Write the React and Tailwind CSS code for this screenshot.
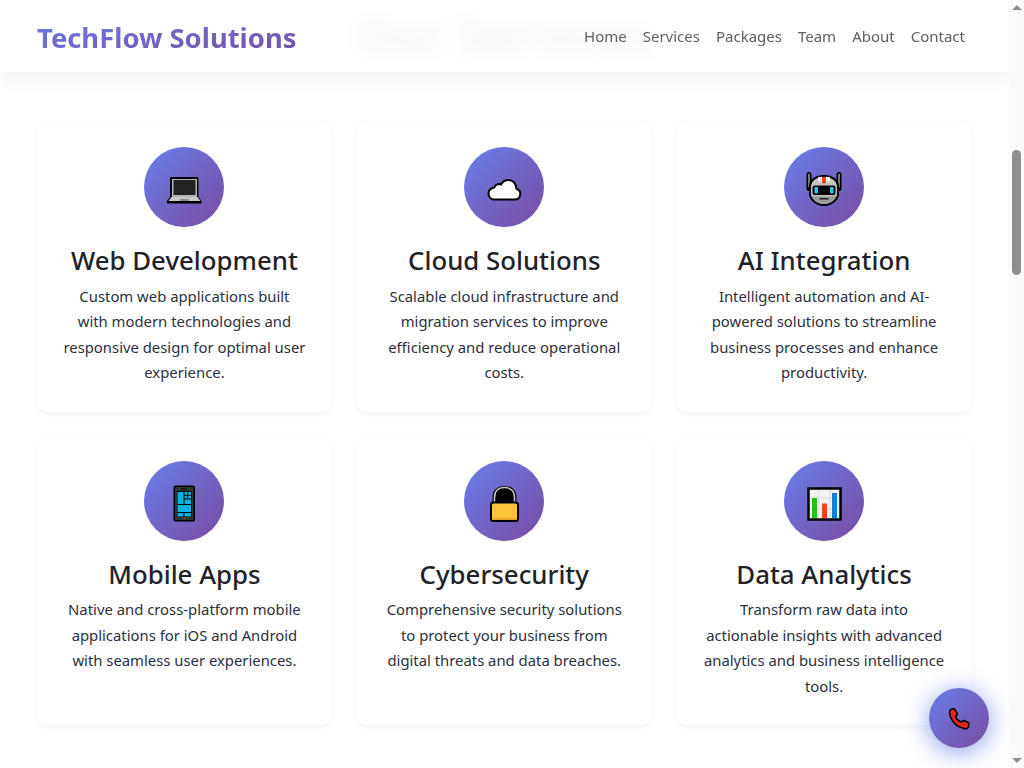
const services = [
  {
    title: "Web Development",
    text: "Custom web applications built with modern technologies and responsive design for optimal user experience.",
    icon: <LaptopIcon />,
  },
  {
    title: "Cloud Solutions",
    text: "Scalable cloud infrastructure and migration services to improve efficiency and reduce operational costs.",
    icon: <CloudIcon />,
  },
  {
    title: "AI Integration",
    text: "Intelligent automation and AI-powered solutions to streamline business processes and enhance productivity.",
    icon: <RobotIcon />,
  },
  {
    title: "Mobile Apps",
    text: "Native and cross-platform mobile applications for iOS and Android with seamless user experiences.",
    icon: <PhoneIcon />,
  },
  {
    title: "Cybersecurity",
    text: "Comprehensive security solutions to protect your business from digital threats and data breaches.",
    icon: <LockIcon />,
  },
  {
    title: "Data Analytics",
    text: "Transform raw data into actionable insights with advanced analytics and business intelligence tools.",
    icon: <ChartIcon />,
  },
];

const links = ["Home", "Services", "Packages", "Team", "About", "Contact"];

function LaptopIcon() {
  return (
    <svg viewBox="0 0 40 40" className="w-10 h-10 overflow-visible">
      <path d="M8 10h25a1.500 1.500 0 0 1 1.500 1.500V30l3 4v1.500a1 1 0 0 1-1 1H4a1 1 0 0 1-1-1V34l3-4V11.500A1.500 1.500 0 0 1 8 10z" fill="#000" />
      <rect x="8" y="12" width="25" height="18" fill="#b5b5b5" />
      <rect x="9.500" y="13" width="22" height="15" fill="#222" />
      <path d="M7.500 30h26l3 4h-32z" fill="#c9c9c9" />
      <rect x="16" y="32" width="9" height="2" fill="#888" />
    </svg>
  );
}

function CloudIcon() {
  return (
    <svg viewBox="0 0 40 40" className="w-10 h-10 overflow-visible">
      <path
        d="M10 32.500h21a5.500 5.500 0 0 0 1.500-10.700C32 16.500 29 13 24.500 13c-3.500 0-6 1.800-7.500 4.500-1.500-.8-4.500-.6-6 1.500-.3.400-.5.900-.6 1.400C6.500 21 4.500 23.500 4.500 26.500c0 3.500 2.500 6 5.500 6z"
        fill="#fff"
        stroke="#000"
        strokeWidth="2"
      />
    </svg>
  );
}

function RobotIcon() {
  return (
    <svg viewBox="0 0 40 40" className="w-10 h-10 overflow-visible">
      <path d="M5 7.500v14M35 7.500v14" stroke="#000" strokeWidth="5" strokeLinecap="round" />
      <path d="M5 7.500v12M35 7.500v12" stroke="#777" strokeWidth="2" strokeLinecap="round" />
      <path d="M6 20c0-7 6-11 14-11s14 4 14 11v7c0 4-5 11-14 11S6 31 6 27z" fill="#c4c4c4" stroke="#000" strokeWidth="2" />
      <path d="M7 28c1 4 6 9 13 9s12-5 13-9c-3 2-23 2-26 0z" fill="#9a9a9a" />
      <path d="M14 10h12v4.500h-12z" fill="#eee" />
      <path d="M18 10h4v5.500l-1 1h-2l-1-1z" fill="#f0421c" />
      <rect x="8.500" y="18.500" width="23" height="9.500" rx="2" fill="#000" />
      <rect x="10.500" y="20" width="3.500" height="6.500" rx="1" fill="#29c5f6" />
      <rect x="26" y="20" width="3.500" height="6.500" rx="1" fill="#29c5f6" />
      <rect x="15.500" y="31" width="9" height="1.500" fill="#222" />
    </svg>
  );
}

function PhoneIcon() {
  return (
    <svg viewBox="0 0 40 40" className="w-10 h-10 overflow-visible">
      <rect x="9.500" y="4.500" width="21.500" height="36" rx="2" fill="#000" />
      <rect x="11" y="6" width="18.500" height="33" rx="1" fill="#333" />
      <rect x="17" y="7.500" width="6" height="1" fill="#000" />
      <rect x="13" y="10" width="15" height="26" fill="#000" />
      <rect x="13.500" y="11" width="6" height="12" fill="#00b4e8" />
      <rect x="20.500" y="11" width="2.800" height="2.800" fill="#00b4e8" />
      <rect x="24.200" y="11" width="2.800" height="2.800" fill="#00b4e8" />
      <rect x="20.500" y="14.700" width="2.800" height="2.800" fill="#00b4e8" />
      <rect x="24.200" y="14.700" width="2.800" height="2.800" fill="#00b4e8" />
      <rect x="20.500" y="18.500" width="6.500" height="4.500" fill="#00b4e8" />
      <rect x="13.500" y="24" width="13.500" height="7" fill="#00b4e8" />
      <rect x="13.500" y="32" width="6" height="3.500" fill="#00b4e8" />
      <rect x="20.500" y="32" width="6.500" height="3.500" fill="#00b4e8" />
      <circle cx="20.500" cy="37.500" r="0.800" fill="#777" />
    </svg>
  );
}

function LockIcon() {
  return (
    <svg viewBox="0 0 40 40" className="w-10 h-10 overflow-visible">
      <path d="M8.500 24v-7.500c0-7.500 5-11.500 12-11.500S32.500 9 32.500 16.500V24z" fill="#000" />
      <path d="M10.500 22v-5.500c0-6.500 4-10 10-10s10 3.500 10 10V22" fill="none" stroke="#c9c9c9" strokeWidth="1.500" />
      <rect x="7" y="21.500" width="27" height="18.500" rx="2.500" fill="#ffc439" stroke="#000" strokeWidth="2" />
      <path d="M8 38h25" stroke="#e5a21f" strokeWidth="1.500" />
    </svg>
  );
}

function ChartIcon() {
  return (
    <svg viewBox="0 0 40 40" className="w-10 h-10 overflow-visible">
      <rect x="4.500" y="7.500" width="32" height="31" fill="#f4f4f4" stroke="#000" strokeWidth="2.500" />
      <path d="M15 9v28M26 9v28M6 17h29M6 28h29" stroke="#dcdcdc" strokeWidth="1" />
      <rect x="8" y="17" width="5" height="20" fill="#1cc41c" />
      <rect x="18" y="22.500" width="5" height="14.500" fill="#f4421c" />
      <rect x="28" y="12" width="5" height="25" fill="#0f80d8" />
    </svg>
  );
}

function HandsetIcon() {
  return (
    <svg viewBox="0 0 24 24" className="w-6 h-6 overflow-visible">
      <path
        d="M3.500 3.500L7.500 2.800 10.500 8 8.500 10.800C9.500 13.500 11.500 15 14 16L16.800 14.300 22 17 21.500 21C20.500 22.800 18 23 16 22.300 9.500 20.500 5.500 16 3.500 11 2.500 8 2.500 5 3.500 3.500z"
        fill="#e0261c"
        stroke="#000"
        strokeWidth="1.500"
        strokeLinejoin="round"
      />
    </svg>
  );
}

function ServiceCard({ title, text, icon }) {
  return (
    <div className="bg-white rounded-xl shadow-[0_2px_6px_rgba(0,0,0,0.06)] px-[26.8px] pt-[25px] pb-[25.6px] text-center">
      <div className="w-20 h-20 mx-auto rounded-full bg-gradient-to-br from-[#667eea] to-[#764ba2] flex items-center justify-center">
        {icon}
      </div>
      <h3 className="mt-[15px] text-[25.8px] leading-[36px] font-medium text-[#1f2328]">{title}</h3>
      <p className="mt-[5.6px] text-[14.85px] leading-[25.6px] text-[#2c3040]">{text}</p>
    </div>
  );
}

function Scrollbar() {
  return (
    <div className="w-[15px] h-full bg-[#fafafa] relative shrink-0">
      <div className="absolute top-[5px] left-[3px] w-0 h-0 border-x-[5px] border-x-transparent border-b-[5px] border-b-[#8f8f8f]" />
      <div className="absolute top-[150px] left-[3px] w-[9px] h-[125px] rounded-full bg-[#8f8f8f]" />
      <div className="absolute bottom-[5px] left-[3px] w-0 h-0 border-x-[5px] border-x-transparent border-t-[5px] border-t-[#8f8f8f]" />
    </div>
  );
}

export default function App() {
  return (
    <div className="flex h-screen overflow-hidden bg-white font-['Noto_Sans',sans-serif]">
      <div className="relative flex-1 overflow-hidden">
        {/* fixed header, the page heading sits blurred behind it */}
        <header className="absolute top-0 inset-x-0 h-[72px] z-10 bg-white/95 backdrop-blur-[10px] shadow-[0_4px_20px_rgba(0,0,0,0.08)] flex items-center justify-between pl-[37px] pr-[44px]">
          <div className="pt-1 text-[27.4px] font-bold bg-gradient-to-br from-[#667eea] to-[#764ba2] bg-clip-text text-transparent">
            TechFlow Solutions
          </div>
          <nav className="flex gap-4 text-[15px] text-[#606060]">
            {links.map((l) => (
              <a key={l} href="#">{l}</a>
            ))}
          </nav>
        </header>

        <h2 className="pt-[6px] h-[122px] text-center text-[48px] leading-[60px] font-bold text-[#1f2328]">Our Services</h2>

        <main className="pl-[36.5px] pr-[37px] grid grid-cols-3 gap-6">
          {services.map((s) => (
            <ServiceCard key={s.title} {...s} />
          ))}
        </main>

        <button className="absolute right-5 bottom-5 w-[60px] h-[60px] rounded-full bg-gradient-to-br from-[#667eea] to-[#764ba2] shadow-[0_4px_24px_rgba(102,126,234,0.75)] flex items-center justify-center">
          <HandsetIcon />
        </button>
      </div>
      <Scrollbar />
    </div>
  );
}
